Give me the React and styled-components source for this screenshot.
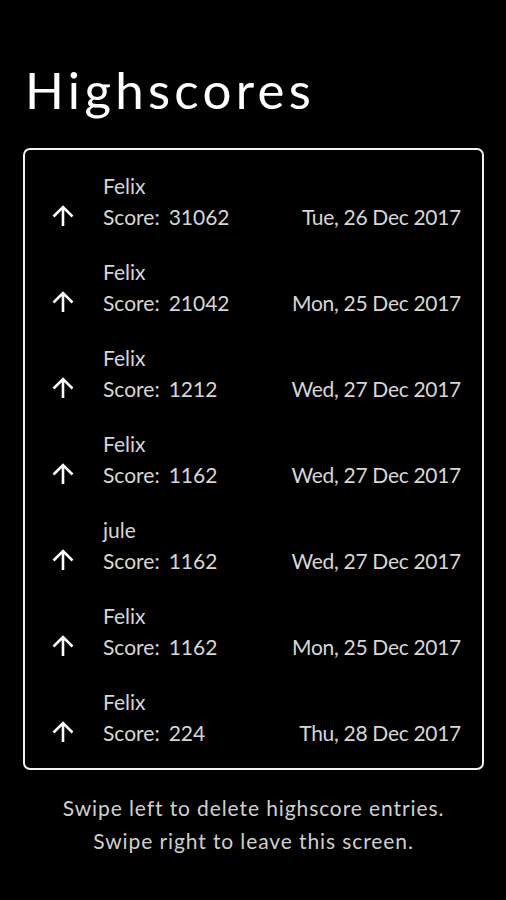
import React from "react";
import styled, { createGlobalStyle } from "styled-components";

const entries = [
  { name: "Felix", score: 31062, date: "Tue, 26 Dec 2017" },
  { name: "Felix", score: 21042, date: "Mon, 25 Dec 2017" },
  { name: "Felix", score: 1212, date: "Wed, 27 Dec 2017" },
  { name: "Felix", score: 1162, date: "Wed, 27 Dec 2017" },
  { name: "jule", score: 1162, date: "Wed, 27 Dec 2017" },
  { name: "Felix", score: 1162, date: "Mon, 25 Dec 2017" },
  { name: "Felix", score: 224, date: "Thu, 28 Dec 2017" },
];

export default function App() {
  return (
    <Screen>
      <GlobalStyle />
      <Title>Highscores</Title>
      <List>
        {entries.map((e, i) => (
          <Row key={i}>
            <Arrow viewBox="0 0 24 24">
              <path d="M12 22V3M2.5 12.5L12 3l9.5 9.5" />
            </Arrow>
            <Info>
              <Name>{e.name}</Name>
              <ScoreLine>
                <span>
                  Score:<Value>{e.score}</Value>
                </span>
                <DateText>{e.date}</DateText>
              </ScoreLine>
            </Info>
          </Row>
        ))}
      </List>
      <Hint>
        Swipe left to delete highscore entries.
        <br />
        Swipe right to leave this screen.
      </Hint>
    </Screen>
  );
}

const GlobalStyle = createGlobalStyle`
  html, body {
    margin: 0;
    background: #000;
  }
  body {
    font-family: Lato, "Noto Sans", sans-serif;
  }
`;

const Screen = styled.div`
  width: 506px;
  height: 900px;
  background: #000;
  padding: 57px 22px 0 23px;
  box-sizing: border-box;
`;

const Title = styled.h1`
  margin: 0 0 25px 2px;
  font-size: 51px;
  font-weight: 400;
  line-height: 66px;
  color: #fff;
  letter-spacing: 4.3px;
`;

const List = styled.div`
  border: 2px solid #f2f2f2;
  border-radius: 7px;
  padding: 8px 21px 8px 26px;
`;

const Row = styled.div`
  display: flex;
  align-items: flex-end;
  padding: 12px 0;
`;

const Arrow = styled.svg`
  width: 24px;
  height: 24px;
  flex: none;
  margin: 0 28px 4px 0;
  fill: none;
  stroke: #fff;
  stroke-width: 2.6;
`;

const Info = styled.div`
  flex: 1;
  color: #d6d6d6;
  font-size: 21px;
  line-height: 31px;
`;

const Name = styled.div``;

const ScoreLine = styled.div`
  display: flex;
  justify-content: space-between;
`;

const Value = styled.span`
  margin-left: 9px;
`;

const DateText = styled.span`
  letter-spacing: -0.3px;
`;

const Hint = styled.p`
  margin: 21px 0 0;
  text-align: center;
  color: #cfcfcf;
  font-size: 21px;
  line-height: 33px;
  letter-spacing: 0.9px;
`;
